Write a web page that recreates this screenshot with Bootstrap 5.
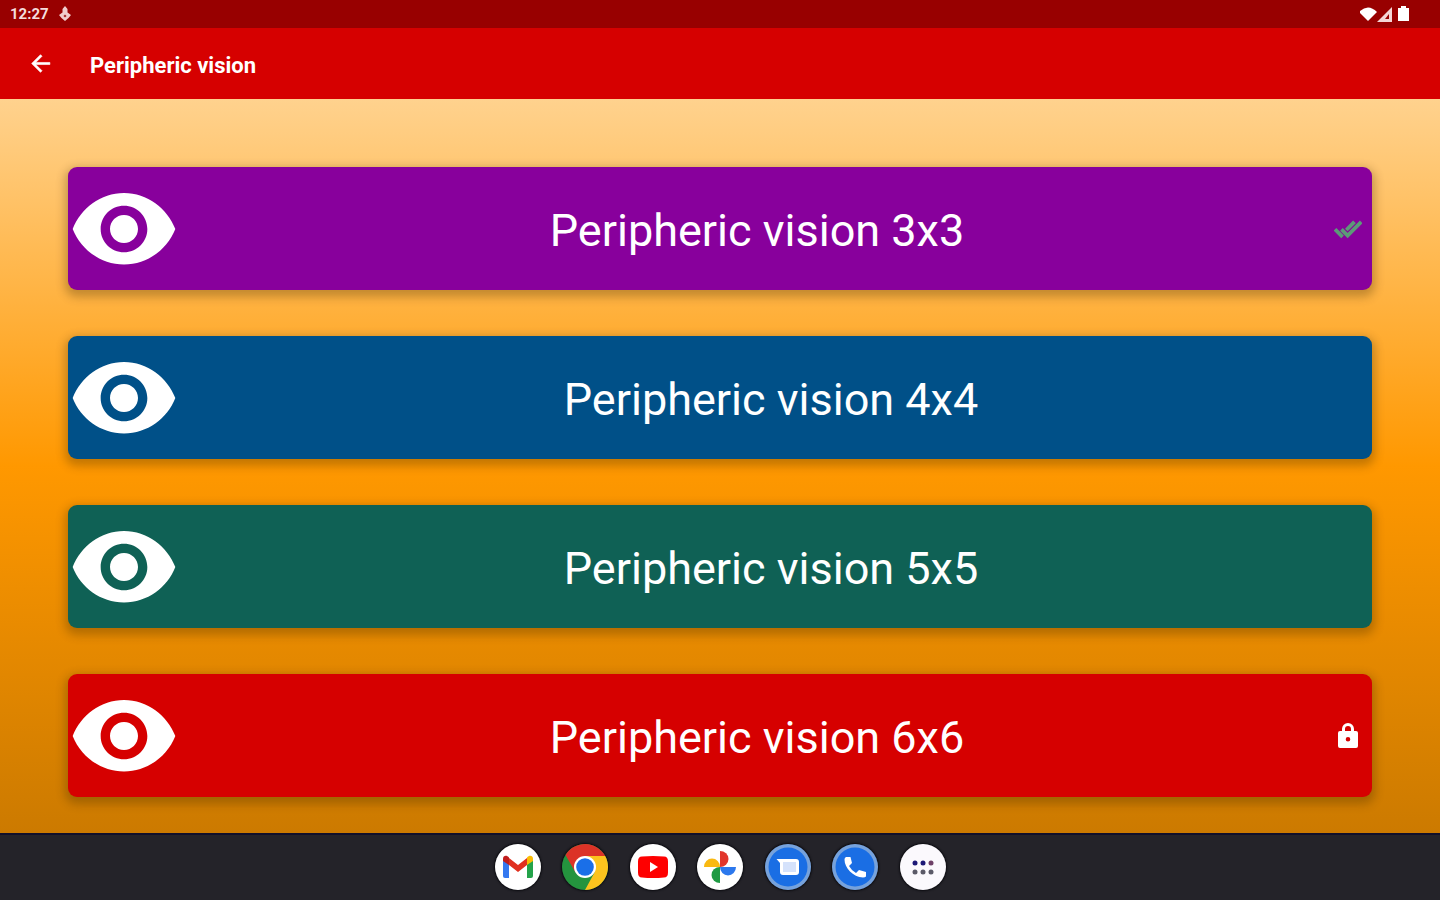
<!DOCTYPE html>
<html lang="en">
<head>
<meta charset="utf-8">
<meta name="viewport" content="width=device-width, initial-scale=1">
<title>Peripheric vision</title>
<link rel="stylesheet" href="https://cdn.jsdelivr.net/npm/bootstrap@5.3.0/dist/css/bootstrap.min.css">
<style>
body { font-family: Roboto, "Liberation Sans", sans-serif; background: #242329; }
svg { display: block; flex: none; }
.status-bar { background: #980000; height: 28px; padding: 0 30px 0 10px; font-size: 15px; line-height: 28px; color: #f4dcdc; }
.status-time { font-weight: 700; }
.app-bar { background: #d60000; height: 71px; padding: 0 28px; gap: 37px; }
.app-title { font-size: 22px; line-height: 28px; font-weight: 700; padding-top: 4px; }
.levels { background: linear-gradient(#ffd28e, #ff9800 50%, #cc7a00); padding: 68px 68px 0; gap: 46px; }
.level { height: 123px; border-radius: 9px; padding: 0 10px 0 0; border: 0; color: #fff; box-shadow: 0 4px 10px 3px rgba(60, 40, 0, .3); }
.level-name { font-size: 45px; line-height: 56px; padding-top: 4px; }
.purple { background: #88009c; }
.blue { background: #005088; }
.green { background: #0f6155; }
.red { background: #d60000; }
.dock { background: #242329; height: 67px; box-shadow: inset 0 2px #11102a; }
.dock-apps { width: 451px; }
.dock-apps a { border-radius: 50%; box-shadow: 0 0 2px 1px #0b0b10; }
</style>
</head>
<body class="min-vh-100 d-flex flex-column">
<svg width="0" height="0" class="position-absolute" aria-hidden="true">
  <symbol id="eye" viewBox="0 0 24 24"><path fill="#fff" d="M12 4.300C7 4.300 2.730 7.610 1 12c1.730 4.390 6 7.600 11 7.600s9.270-3.210 11-7.600c-1.730-4.390-6-7.700-11-7.700zM12 17c-2.760 0-5-2.240-5-5s2.240-5 5-5 5 2.240 5 5-2.240 5-5 5zm0-8c-1.660 0-3 1.340-3 3s1.340 3 3 3 3-1.340 3-3-1.340-3-3-3z"/></symbol>
</svg>

<div class="status-bar d-flex justify-content-between align-items-center">
  <div class="d-flex align-items-center gap-2">
    <span class="status-time">12:27</span>
    <svg width="16" height="16" viewBox="0 0 16 16" fill="#f0cccc"><path d="M8 0l2.500 3v3.500L14 9l-2.500 3L8 15l-3.500-3L2 9l3.500-2.500V3z"/><circle cx="8" cy="10" r="1.300" fill="#a33"/></svg>
  </div>
  <div class="d-flex align-items-center">
    <svg width="50" height="18" viewBox="0 0 50 18" fill="#fff"><path d="M-1 7Q8-2 17 7L8 16z"/><path d="M17 17L32 2v15z" fill="#f4d5d5"/><path d="M25 14l4-5v5z" fill="#980000"/><path d="M41 1h5v2h3v13H38V3h3z"/></svg>
  </div>
</div>

<header class="app-bar d-flex align-items-center text-white">
  <a href="#" aria-label="Back"><svg width="25" height="25" viewBox="0 0 24 24" fill="#fff" stroke="#fff" stroke-width=".6"><path d="M21 11H7.500l6-6L12 3.500 3.500 12l8.500 8.500 1.500-1.500-6-6H21z"/></svg></a>
  <h1 class="app-title m-0">Peripheric vision</h1>
</header>

<main class="levels flex-grow-1 d-flex flex-column">
  <button type="button" class="level purple d-flex align-items-center w-100">
    <svg width="112" height="112"><use href="#eye"/></svg>
    <span class="level-name flex-grow-1 text-center">Peripheric vision 3x3</span>
    <svg width="28" height="28" viewBox="0 0 24 24" fill="#5c9a78" stroke="#5c9a78" stroke-width=".9"><path d="M18 7l-1.600-1.600-6.300 6.300 1.600 1.600L18 7zm4.200-1.600L11.700 16l-4.200-4.200-1.600 1.600 5.800 5.800L23.800 7zM.4 13.400l5.800 5.800 1.600-1.600L2 11.800z"/></svg>
  </button>
  <button type="button" class="level blue d-flex align-items-center w-100">
    <svg width="112" height="112"><use href="#eye"/></svg>
    <span class="level-name flex-grow-1 text-center">Peripheric vision 4x4</span>
  </button>
  <button type="button" class="level green d-flex align-items-center w-100">
    <svg width="112" height="112"><use href="#eye"/></svg>
    <span class="level-name flex-grow-1 text-center">Peripheric vision 5x5</span>
  </button>
  <button type="button" class="level red d-flex align-items-center w-100">
    <svg width="112" height="112"><use href="#eye"/></svg>
    <span class="level-name flex-grow-1 text-center">Peripheric vision 6x6</span>
    <svg width="28" height="28" viewBox="0 0 28 28"><path fill="#fff" fill-rule="evenodd" d="M6 9h2V7a6 6 0 0 1 12 0v2h2a2 2 0 0 1 2 2v13a2 2 0 0 1-2 2H6a2 2 0 0 1-2-2V11a2 2 0 0 1 2-2zm5 0h6V7a3 3 0 0 0-6 0zm3 6a2.300 2.300 0 1 0 0 4.600 2.300 2.300 0 0 0 0-4.600z"/></svg>
  </button>
</main>

<footer class="dock d-flex justify-content-center align-items-center">
  <nav class="dock-apps d-flex justify-content-between" aria-label="Apps">
    <a href="#" aria-label="Gmail"><svg width="46" height="46" viewBox="0 0 46 46"><circle cx="23" cy="23" r="23" fill="#fff"/><path fill="#3478f0" d="M8 16l6 4v14H10a2 2 0 0 1-2-2z"/><path fill="#24a34a" d="M38 16l-6 4v14h4a2 2 0 0 0 2-2z"/><path fill="#e0301f" d="M14 14l9 7 9-7v7l-9 7-9-7z"/><path fill="#c01d1d" d="M8 17v-2c0-4 4-4 6-1.500V21z"/><path fill="#fbbc04" d="M38 17v-2c0-4-4-4-6-1.500V21z"/></svg></a>
    <a href="#" aria-label="Chrome"><svg width="46" height="46" viewBox="0 0 46 46"><circle cx="23" cy="23" r="23" fill="#24943e"/><path fill="#fcc31e" d="M23 12h20.200A23 23 0 0 1 23 46l9.500-17.500z"/><path fill="#dc3327" d="M3.500 11a23 23 0 0 1 39.700 1H23L13.500 28.500z"/><circle cx="23" cy="23" r="11" fill="#fff"/><circle cx="23" cy="23" r="8.800" fill="#1a6fe8"/></svg></a>
    <a href="#" aria-label="YouTube"><svg width="46" height="46" viewBox="0 0 46 46"><circle cx="23" cy="23" r="23" fill="#fff"/><path fill="#fe0000" d="M12 12.500q11-1 22 0 4 0 4 5v11q0 5-4 5-11 1-22 0-4 0-4-5v-11q0-5 4-5z"/><path fill="#fff" d="M20 18l8 5-8 5z"/></svg></a>
    <a href="#" aria-label="Photos"><svg width="46" height="46" viewBox="0 0 46 46"><circle cx="23" cy="23" r="23" fill="#fff"/><path fill="#e2352b" d="M23 7a8.500 8 0 0 1 0 16z"/><path fill="#2c78ed" d="M39 23a8 8.500 0 0 1-16 0z"/><path fill="#1f9a43" d="M23 39a8.500 8 0 0 1 0-16z"/><path fill="#f9b912" d="M7 23a8 8.500 0 0 1 16 0z"/></svg></a>
    <a href="#" aria-label="Messages"><svg width="46" height="46" viewBox="0 0 46 46"><circle cx="23" cy="23" r="23" fill="#76a2dc"/><circle cx="23" cy="23" r="19.500" fill="#1a6ee4"/><path fill="#fff" d="M11.500 15H31q3 0 3 3v10q0 3-3 3H18q-3 0-3-3v-9z"/><path fill="#d5e2fb" d="M18 18h13v10H18z"/></svg></a>
    <a href="#" aria-label="Phone"><svg width="46" height="46" viewBox="0 0 46 46"><circle cx="23" cy="23" r="23" fill="#76a2dc"/><circle cx="23" cy="23" r="19.500" fill="#1a6ee4"/><path fill="#fff" d="M14 13h4.500l1.500 6-3 3q2.500 4.500 7 7l3-3 7 2v4.500q-1 1-3 1C21 33 12.500 24 12.500 15.500q0-2 1.500-2.500z"/></svg></a>
    <a href="#" aria-label="All apps"><svg width="46" height="46" viewBox="0 0 46 46"><circle cx="23" cy="23" r="23" fill="#fbf9fd"/><g fill="#1c1876"><circle cx="15" cy="19" r="2.500"/><circle cx="23" cy="19" r="2.500"/><circle cx="31" cy="19" r="2.500" fill="#6e4068"/></g><g fill="#5b5a68"><circle cx="15" cy="28" r="2.500"/><circle cx="23" cy="28" r="2.500"/><circle cx="31" cy="28" r="2.500"/></g></svg></a>
  </nav>
</footer>
<script src="https://cdn.jsdelivr.net/npm/bootstrap@5.3.0/dist/js/bootstrap.bundle.min.js"></script>
</body>
</html>
